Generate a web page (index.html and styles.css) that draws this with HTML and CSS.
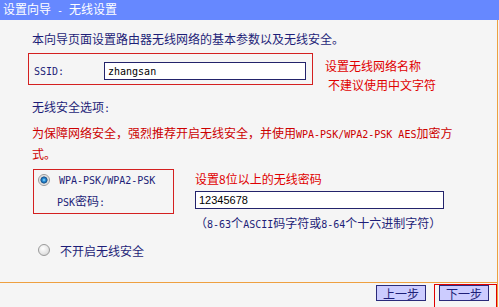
FILE: index.html
```html
<!DOCTYPE html>
<html lang="zh-CN">
<head>
    <meta charset="UTF-8">
    <meta name="viewport" content="width=device-width, initial-scale=1.0">
    <title>设置向导 - 无线设置</title>
    <link rel="stylesheet" href="styles.css">
</head>
<body>
    <div class="title">设置向导<span class="en"> - </span>无线设置</div>
    <div class="main">
        <div class="content">
            <p class="intro">本向导页面设置路由器无线网络的基本参数以及无线安全。</p>

            <div class="ssid-row">
                <div class="mark ssid-box">
                    <span class="en ssid-label">SSID:</span>
                    <input type="text" class="field en ssid-input" value="zhangsan">
                </div>
                <div class="note note-ssid">
                    <div>设置无线网络名称</div>
                    <div class="note-indent">不建议使用中文字符</div>
                </div>
            </div>

            <p class="section">无线安全选项<span class="en">:</span></p>
            <p class="warn">为保障网络安全，强烈推荐开启无线安全，并使用<span class="en">WPA-PSK/WPA2-PSK AES</span>加密方<br>式。</p>

            <div class="psk-row">
                <div class="mark psk-box">
                    <div class="opt"><span class="radio on"></span><span class="en">WPA-PSK/WPA2-PSK</span></div>
                    <div class="psk-label"><span class="en">PSK</span>密码<span class="en">:</span></div>
                </div>
                <div class="psk-side">
                    <div class="note">设置8位以上的无线密码</div>
                    <input type="text" class="field psk-input" value="12345678">
                    <div class="hint">（<span class="en">8-63</span>个<span class="en">ASCII</span>码字符或<span class="en">8-64</span>个十六进制字符）</div>
                </div>
            </div>

            <div class="opt opt-off"><span class="radio"></span>不开启无线安全</div>
        </div>

        <div class="footer">
            <button class="btn">上一步</button>
            <span class="btn-mark"><button class="btn">下一步</button></span>
        </div>
    </div>
</body>
</html>
```

FILE: styles.css
```css
body {
    margin: 0;
    background-color: #f5f5f5;
    font-family: "Noto Sans CJK SC", sans-serif;
    font-size: 12px;
    color: #1e1e78;
}
p {
    margin: 0;
}

.en {
    font-family: "DejaVu Sans Mono", monospace;
    font-size: 10px;
}

.title {
    height: 20px;
    line-height: 17px;
    padding-left: 3px;
    background-color: #6688ff;
    color: #ffffff;
}
.title .en {
    white-space: pre;
}

.main {
    width: 498px;
    border-right: 1px solid #eea040;
    box-sizing: border-box;
}
.content {
    padding: 9px 0 22px 32px;
}

.intro {
    line-height: 20px;
}

.mark {
    border: 1px solid #d42020;
}

.ssid-row {
    display: flex;
    align-items: flex-start;
    margin-top: 4px;
}
.ssid-box {
    display: flex;
    align-items: center;
    margin-left: -4px;
    padding: 8px 6px 4px 5px;
}
.ssid-label {
    width: 70px;
}

.field {
    box-sizing: border-box;
    height: 18px;
    padding: 0 3px;
    border: 1px solid #23236b;
    background-color: #ffffff;
    color: #000000;
    outline: none;
}
.ssid-input {
    width: 202px;
}
.psk-input {
    width: 249px;
    margin-top: 2px;
    font-family: "Liberation Sans", Arial, sans-serif;
    font-size: 11px;
}

.note {
    color: #e00000;
    line-height: 20px;
}
.note-ssid {
    margin-left: 12px;
    padding-top: 3px;
    line-height: 19px;
}
.note-indent {
    padding-left: 3px;
}

.section {
    margin-top: 3px;
    line-height: 20px;
}
.warn {
    margin-top: 4px;
    line-height: 19px;
    color: #cc0000;
}

.psk-row {
    display: flex;
    align-items: flex-start;
    margin-top: 6px;
}
.psk-box {
    width: 141px;
    box-sizing: border-box;
    margin-left: 1px;
    padding-left: 4px;
}
.psk-label {
    padding-left: 19px;
    line-height: 21px;
}
.psk-side {
    display: flex;
    flex-direction: column;
    align-items: flex-start;
    margin-left: 21px;
}
.hint {
    margin-top: 4px;
    line-height: 20px;
}

.opt {
    display: flex;
    align-items: center;
    height: 20px;
}
.opt .radio {
    margin-right: 9px;
}
.opt-off {
    margin-top: 5px;
    padding-left: 6px;
}
.opt-off .radio {
    margin-right: 10px;
}

.radio {
    display: inline-block;
    width: 12px;
    height: 12px;
    box-sizing: border-box;
    border-radius: 50%;
    border: 1px solid #9a9a9a;
    background: radial-gradient(circle at 40% 35%, #ffffff 0, #e4e4e4 60%, #c4c4c4 100%);
}
.radio.on {
    background: radial-gradient(circle at 50% 50%, #9fe4ff 0, #2a90d8 1.5px, #144f8a 3.2px, #d0d0d0 3.8px, #f2f2f2 5px);
}

.footer {
    display: flex;
    justify-content: flex-end;
    align-items: flex-start;
    gap: 13px;
    box-sizing: border-box;
    height: 27px;
    padding: 2px 8px 0 0;
    border-top: 1px solid #eea040;
    border-bottom: 1px solid #eea040;
}
.btn {
    width: 50px;
    height: 16px;
    padding: 0;
    border: 1px solid #2a2a7a;
    background-color: #ccccff;
    color: #1e1e78;
    font-family: "Noto Sans CJK SC", sans-serif;
    font-size: 12px;
    line-height: 13px;
}
.btn-mark {
    position: relative;
    display: flex;
}
.btn-mark::after {
    content: "";
    position: absolute;
    left: -5px;
    top: -1px;
    right: -8px;
    bottom: -8px;
    border: 1px solid #e00000;
}
```
